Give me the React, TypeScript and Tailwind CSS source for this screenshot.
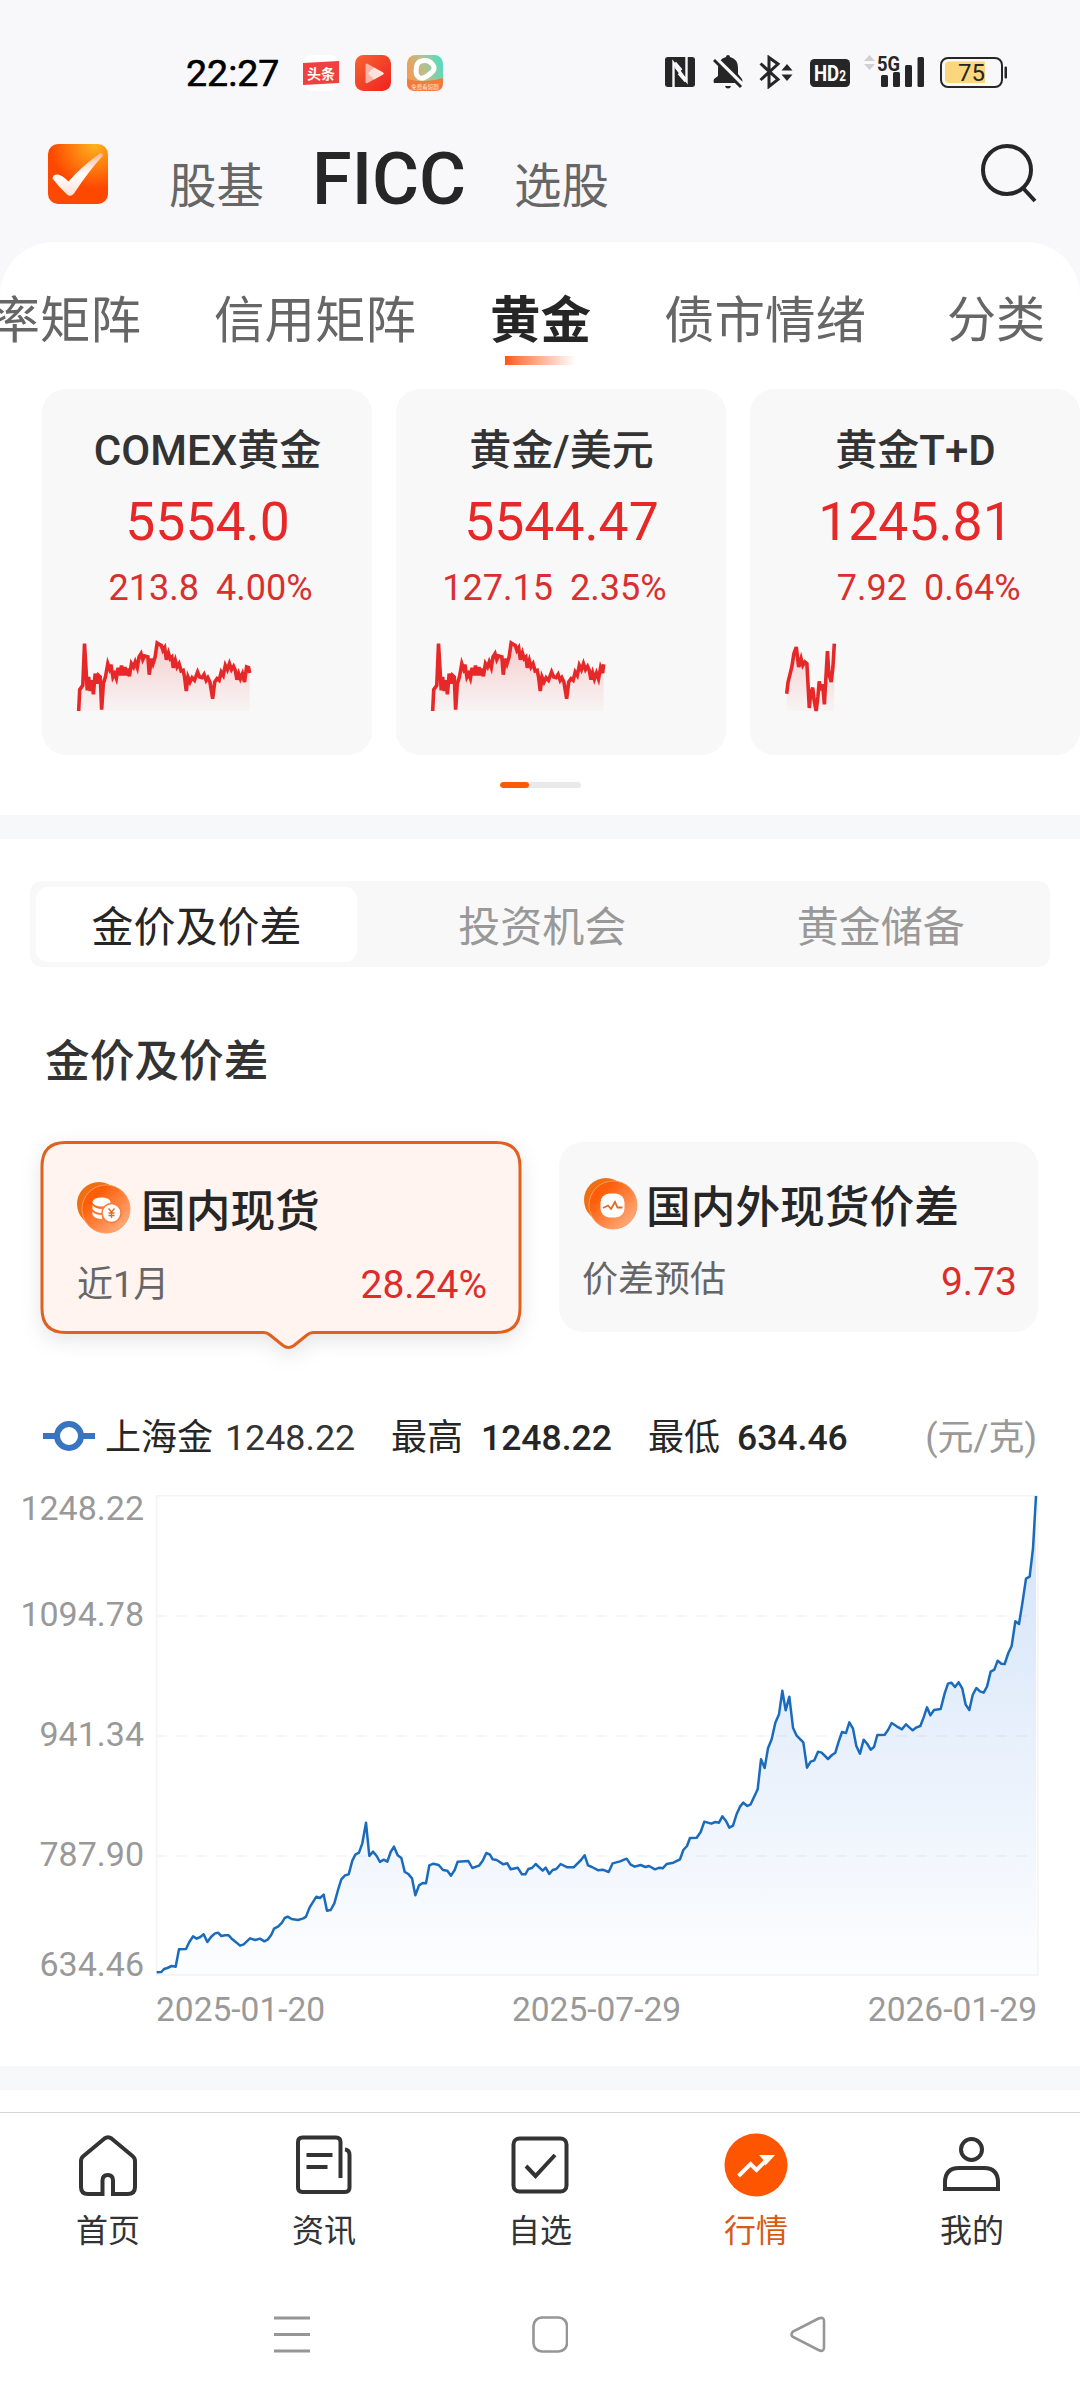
import React from "react";

const FONT = "font-[Roboto,'Noto_Sans_CJK_SC',sans-serif]";

const SPARK =
  "228,692 231,628 240,615 245,490 253,630 257,590 262,632 266,600 271,642 276,580 282,610 286,585 291,590 295,688 300,610 306,590 313,550 318,565 322,553 328,590 333,580 338,594 343,562 348,585 353,556 358,585 363,560 368,585 372,565 376,588 382,550 388,560 393,545 399,562 404,530 410,520 415,538 420,527 430,530 434,583 440,535 445,550 451,530 457,488 463,492 469,495 474,510 479,502 484,538 490,518 495,535 500,530 504,562 510,540 515,560 521,550 527,572 533,570 537,590 542,632 547,590 553,605 559,592 566,600 575,575 581,590 588,592 594,582 600,600 605,592 611,605 619,655 625,605 632,595 638,600 644,575 650,585 656,555 662,568 668,550 674,568 680,558 685,570";

const QUOTES = [
  {
    name: "COMEX黄金",
    price: "5554.0",
    change: "213.8",
    pct: "4.00%",
    left: 228,
    right: 727,
    points: SPARK + " 690,598 695,580 700,595 706,580 712,605 718,560 724,562 727,578",
  },
  {
    name: "黄金/美元",
    price: "5544.47",
    change: "127.15",
    pct: "2.35%",
    left: 228,
    right: 727,
    points: SPARK + " 690,598 695,578 700,596 706,578 712,596 718,562 724,578 727,552",
  },
  {
    name: "黄金T+D",
    price: "1245.81",
    change: "7.92",
    pct: "0.64%",
    left: 228,
    right: 367,
    points:
      "228,640 232,605 243,560 249,520 256,500 263,560 270,535 275,555 281,545 287,550 294,683 298,640 304,622 308,660 314,692 319,650 323,603 328,630 333,612 338,672 347,512 351,580 358,605 363,560 367,490",
  },
];

// Price history in thirds of a pixel, split into two legs with their own origin.
const LEGS = [
  {
    dx: -48,
    dy: 825,
    points:
      "50,607 64,606 72,597 82,594 95,588 107,590 117,538 138,537 148,516 159,499 170,506 181,501 191,493 202,516 213,501 224,491 234,488 244,498 255,496 266,496 277,508 290,518 300,527 311,523 330,505 346,510 360,506 373,514 384,508 394,494 402,476 414,470 426,458 434,444 443,440 455,447 474,450 490,445 498,440 509,412 529,380 540,384 551,374 561,422 572,420 583,400 594,360 604,328 615,316 626,313 637,272 646,254 657,248 667,220 678,158 688,258 699,245 710,258 720,276 731,269 742,275 752,246 762,230 773,256 784,264 794,305 806,313 816,325 826,376 837,346 848,339 858,340 868,286 880,281 896,285 909,300 922,302 933,317 944,300 953,275 985,273 997,294 1017,287 1028,272 1039,249 1050,254 1058,268 1070,270 1090,283 1102,280 1112,298 1133,293 1146,313 1156,313 1165,297 1176,294 1187,282 1208,302 1217,293 1228,312 1238,300 1249,297 1262,282 1282,292 1301,292 1323,270 1334,256 1344,286 1356,291 1375,301 1388,299 1406,306",
  },
  {
    dx: 1332,
    dy: -45,
    points:
      "38,1150 60,1144 80,1136 92,1154 104,1160 122,1155 136,1161 147,1158 165,1168 178,1163 188,1165 200,1152 220,1148 240,1138 250,1110 261,1098 270,1074 290,1073 302,1056 313,1025 334,1031 346,1026 357,1028 367,1009 378,1023 388,1043 399,1037 410,1002 420,980 430,968 442,978 452,973 473,928 483,838 494,864 504,805 515,778 526,728 537,703 547,632 557,691 568,650 579,743 590,767 610,787 621,863 632,845 643,841 654,815 665,818 684,837 696,825 706,818 716,785 726,756 738,759 748,727 759,746 769,798 780,821 791,779 802,792 812,809 822,801 832,765 854,764 864,750 875,729 890,739 906,748 918,733 938,751 950,742 961,738 971,712 981,682 991,706 1002,690 1022,687 1034,640 1044,611 1054,608 1065,621 1076,607 1087,626 1097,674 1108,690 1118,645 1129,624 1140,634 1151,638 1161,620 1172,575 1183,569 1193,542 1204,551 1214,552 1225,519 1235,498 1246,424 1257,432 1267,370 1278,296 1289,290 1299,205 1308,48",
  },
];

const HISTORY = LEGS.map((leg) =>
  leg.points
    .split(" ")
    .map((p) => {
      const [x, y] = p.split(",").map(Number);
      return `${x + leg.dx},${y + leg.dy}`;
    })
    .join(" ")
).join(" ");

function StatusBar() {
  return (
    <div className="flex h-[144px] items-start">
      <span className="ml-[186px] mt-[54px] w-[95px] text-[37.5px] leading-[38px] text-black [-webkit-text-stroke:0.6px_black]">22:27</span>
      <svg className="ml-[22px] mt-[55px]" width="36" height="36" viewBox="0 0 36 36">
        <rect width="36" height="36" rx="9" fill="#fff" />
        <path d="M0 8 L36 6 V28 L0 30 Z" fill="#f0403f" />
        <text x="18" y="23.5" fontSize="14" fontWeight="700" fill="#fff" textAnchor="middle">头条</text>
      </svg>
      <svg className="ml-[16px] mt-[55px]" width="36" height="36" viewBox="0 0 36 36">
        <defs>
          <linearGradient id="vid" x1="0" y1="0" x2="1" y2="1">
            <stop offset="0" stopColor="#f8642f" />
            <stop offset="1" stopColor="#ee2121" />
          </linearGradient>
        </defs>
        <rect width="36" height="36" rx="8.500" fill="url(#vid)" />
        <path d="M12 8.500 Q10.500 8 10.500 10 V27 Q10.500 29 12.500 28 L28 19.500 Q29.500 18.500 28 17.500 Z" fill="#fbb3a5" />
        <path d="M19 12.500 L28 17.500 Q29.500 18.500 28 19.500 L19 24.500 L13 18.500Z" fill="#fde3de" />
      </svg>
      <svg className="ml-[16px] mt-[55px]" width="36" height="36" viewBox="0 0 36 36">
        <defs>
          <linearGradient id="drm" x1="0" y1=".6" x2="1" y2=".3">
            <stop offset="0" stopColor="#f7974f" />
            <stop offset=".5" stopColor="#b9c08e" />
            <stop offset="1" stopColor="#53dcc0" />
          </linearGradient>
        </defs>
        <rect width="36" height="36" rx="8.500" fill="url(#drm)" />
        <path d="M0 24 Q18 29 36 23 V28 Q36 36 28 36 H8 Q0 36 0 28Z" fill="#f47a3c" />
        <path d="M13 6.500 Q21 3.500 26 10 Q29 14 24 18 Q16 25 12 22.500 Q8 20 9.500 12 Q10 8 13 6.500Z" fill="none" stroke="#fff" strokeWidth="5" />
        <text x="18" y="33.500" fontSize="5.500" fill="#ffe9dd" textAnchor="middle">免费看短剧</text>
      </svg>
      <svg className="ml-[222px] mt-[57px]" width="30" height="30" viewBox="0 0 30 30">
        <rect width="30" height="30" rx="3" fill="#262626" />
        <path d="M9 30 V6 L20 21 M22 0 V24 L11 10" fill="none" stroke="#f8f8fa" strokeWidth="2.400" transform="translate(-.5 0)" />
        <path d="M9.700 6 L16 13.500 M21 24 L14 16" stroke="#f8f8fa" strokeWidth="3.500" />
      </svg>
      <svg className="ml-[18px] mt-[55px]" width="30" height="34" viewBox="0 0 30 34">
        <path d="M15 0 Q17 0 17 2 Q25 4 25 13 V19 L29 24 Q30 26 29 28 H1 Q0 26 1 24 L5 21 V13 Q5 4 13 2 Q13 0 15 0Z M12 31 H18 Q17.500 33.500 15 33.500 Q12.500 33.500 12 31Z" fill="#262626" />
        <path d="M2 2.500 L31 31" stroke="#f8f8fa" strokeWidth="4" />
        <path d="M1 5 L28 32" stroke="#262626" strokeWidth="3" />
      </svg>
      <svg className="ml-[16px] mt-[55px]" width="34" height="34" viewBox="0 0 34 34">
        <path d="M1.500 8.500 L19 24.500 L10 31.500 V2.500 L19 9 L1.500 25" fill="none" stroke="#262626" strokeWidth="3" />
        <path d="M28 9 L33.500 15.500 H22.500Z M28 26 L33.500 19.500 H22.500Z" fill="#262626" />
      </svg>
      <svg className="ml-[17px] mt-[59px]" width="40" height="28" viewBox="0 0 40 28">
        <rect width="40" height="28" rx="4.500" fill="#262626" />
        <text x="4" y="22" fontSize="22" fontWeight="700" fill="#fff" textLength="32" lengthAdjust="spacingAndGlyphs">
          HD<tspan fontSize="14">2</tspan>
        </text>
      </svg>
      <svg className="ml-[14px] mt-[55px] overflow-visible" width="60" height="33" viewBox="0 0 60 33">
        <path d="M5.500 0 L11 6 H0Z M5.500 15 L11 9 H0Z" fill="#d0d0d2" />
        <text x="13" y="15.500" fontSize="20.500" fontWeight="700" fill="#262626" textLength="23" lengthAdjust="spacingAndGlyphs">5G</text>
        <rect x="17" y="20" width="7" height="12" rx="1.500" fill="#262626" />
        <rect x="29" y="17" width="7" height="15" rx="1.500" fill="#262626" />
        <rect x="41" y="10" width="7" height="22" rx="1.500" fill="#262626" />
        <rect x="53.500" y="2" width="6.500" height="30" rx="1.500" fill="#262626" />
      </svg>
      <svg className="ml-[16px] mt-[57px]" width="68" height="31" viewBox="0 0 68 31">
        <rect x="1" y="1" width="61" height="29" rx="7" fill="none" stroke="#262626" strokeWidth="2" />
        <path d="M9 4.500 H45 V26 H9 Q5 26 5 22 V8.500 Q5 4.500 9 4.500Z" fill="#fbd67c" />
        <rect x="64.500" y="9.500" width="2.500" height="12" rx="1" fill="#262626" />
        <text x="31.500" y="24" fontSize="24" fill="#262626" textAnchor="middle">75</text>
      </svg>
    </div>
  );
}

function Header() {
  return (
    <div className="flex h-[98px] items-start">
      <svg className="ml-[48px]" width="60" height="60" viewBox="0 0 60 60">
        <defs>
          <radialGradient id="lg" cx=".78" cy="0" r=".75">
            <stop offset="0" stopColor="#ffb41e" />
            <stop offset="1" stopColor="#fd4800" />
          </radialGradient>
          <linearGradient id="ck" x1="0" y1="0" x2="0" y2="1">
            <stop offset="0" stopColor="#fcb89a" />
            <stop offset=".5" stopColor="#fff" />
            <stop offset="1" stopColor="#fde0d4" />
          </linearGradient>
        </defs>
        <rect width="60" height="60" rx="10" fill="url(#lg)" />
        <path d="M4.500 34.500 Q5 30 10 30.500 Q14 31 20.500 37.500 Q34 22 52 9.500 Q55 8.500 54.500 12 Q40 28 26 49.500 Q22.500 53.500 19 50.500 Q11 43 4.500 34.500Z" fill="url(#ck)" />
      </svg>
      <div className="flex items-baseline leading-[72px] text-[#666]">
        <span className="ml-[61px] w-[94px] -translate-y-[1px] text-[47.500px] whitespace-nowrap">股基</span>
        <span className="ml-[49px] w-[155px] text-[72px] font-medium text-[#262626]">FICC</span>
        <span className="ml-[47px] -translate-y-[1px] text-[47.500px] whitespace-nowrap">选股</span>
      </div>
      <svg className="ml-auto mr-[42px] -mt-[1px]" width="58" height="62" viewBox="0 0 58 62">
        <circle cx="27" cy="27" r="24" fill="none" stroke="#262626" strokeWidth="4" />
        <path d="M43 45 L55 58" stroke="#262626" strokeWidth="4" />
      </svg>
    </div>
  );
}

function Tabs() {
  return (
    <div className="flex h-[147px] items-start overflow-hidden rounded-t-[54px] pt-[54px] text-[50.500px] leading-[50px] whitespace-nowrap text-[#666]">
      <span className="-ml-[61px]">利率矩阵</span>
      <span className="ml-[73px]">信用矩阵</span>
      <div className="ml-[74px] flex flex-col items-center">
        <span className="font-bold text-[#262626]">黄金</span>
        <span className="mt-[10px] h-[9px] w-[71px] bg-linear-to-r from-[#fe5500] to-white" />
      </div>
      <span className="ml-[73px]">债市情绪</span>
      <span className="ml-[81px] text-[49px]">分类</span>
    </div>
  );
}

function QuoteCard({ q, id }: { q: (typeof QUOTES)[number]; id: string }) {
  return (
    <div className="flex h-[366px] w-[330px] shrink-0 flex-col rounded-[24px] bg-[#f8f8f8] pt-[41px]">
      <span className="pl-[1px] text-center text-[42px] leading-[42px] font-medium text-[#333]">{q.name}</span>
      <span className="mt-[23px] pl-[1px] text-center text-[53.500px] leading-[54px] text-[#e62828]">{q.price}</span>
      <div className="mt-[21px] flex text-[36px] leading-[36px] text-[#d9302f]">
        <span className="w-[157px] text-right">{q.change}</span>
        <span className="ml-[17px]">{q.pct}</span>
      </div>
      <svg className="mt-[36px] ml-[36px] overflow-visible" width="172" height="69" viewBox="226 485 502 207" preserveAspectRatio="none">
        <defs>
          <linearGradient id={id} x1="0" y1="0" x2="0" y2="1">
            <stop offset="0" stopColor="#ee2424" stopOpacity=".2" />
            <stop offset="1" stopColor="#ee2424" stopOpacity=".02" />
          </linearGradient>
        </defs>
        <polygon points={`${q.left},692 ${q.points} ${q.right},692`} fill={`url(#${id})`} />
        <polyline points={q.points} fill="none" stroke="#e62828" strokeWidth="3.600" vectorEffect="non-scaling-stroke" />
      </svg>
    </div>
  );
}

function CoinBadge({ kind }: { kind: "coins" | "pulse" }) {
  return (
    <svg width="54" height="52" viewBox="0 0 54 52">
      <defs>
        <linearGradient id={`b-${kind}`} x1=".1" y1=".1" x2=".9" y2=".9">
          <stop offset=".2" stopColor="#fe5e0a" />
          <stop offset="1" stopColor="#ffae80" />
        </linearGradient>
      </defs>
      <circle cx="22" cy="22" r="22" fill="#ef7013" />
      <circle cx="29" cy="27" r="24" fill={`url(#b-${kind})`} stroke="#ff9a5c" strokeWidth="1" />
      {kind === "coins" ? (
        <g>
          <ellipse cx="24.500" cy="20" rx="9" ry="4.500" fill="#fff" />
          <path d="M15.500 23 Q18 27 25 27 V31 Q18 31 15.500 27Z M15.500 29.500 Q18 33 25 33 V37 Q18 37 15.500 33Z" fill="#fff" />
          <circle cx="34.500" cy="31" r="9.500" fill="#fff" stroke="#fe7a35" strokeWidth="1.500" />
          <path d="M31.500 26.500 L34.500 30 L37.500 26.500 M34.500 30 V36 M31.500 31 H37.500 M31.500 33.500 H37.500" fill="none" stroke="#e06a20" strokeWidth="1.400" />
        </g>
      ) : (
        <g>
          <rect x="16.500" y="15.500" width="24" height="24" rx="9" fill="#fff" />
          <path d="M19 30 L24 27.500 L27 31 L31 24 L33.500 29.500 H38.500" fill="none" stroke="#e06a20" strokeWidth="1.800" />
        </g>
      )}
    </svg>
  );
}

function SpreadCards() {
  return (
    <div className="mt-[56px] ml-[40px] flex items-start">
      <div className="relative h-[193px] w-[481px]">
        <svg className="absolute top-0 left-0 overflow-visible drop-shadow-[0_6px_10px_rgba(0,0,0,0.1)]" width="481" height="208" viewBox="0 0 481 208">
          <path
            d="M25.500 1.500 H456 Q480 1.500 480 25.500 V167.500 Q480 191.500 456 191.500 H273 Q270 191.500 267 194 L254 204.500 Q248.500 208.500 243 204.500 L230 194 Q227 191.500 224 191.500 H25.500 Q2 191.500 2 167.500 V25.500 Q2 1.500 25.500 1.500Z"
            fill="#fff4ef"
            stroke="#e06020"
            strokeWidth="3"
          />
        </svg>
        <div className="relative flex items-start pt-[41px] pl-[37px]">
          <CoinBadge kind="coins" />
          <span className="mt-[8px] ml-[10px] text-[44.700px] leading-[45px] font-medium text-[#262626]">国内现货</span>
        </div>
        <div className="relative mt-[31px] flex justify-between pr-[34px] pl-[37px] leading-[38px]">
          <span className="text-[36px] text-[#666]">近1月</span>
          <span className="text-[39px] text-[#dc2c2c]">28.24%</span>
        </div>
      </div>
      <div className="mt-[1px] ml-[38px] h-[190px] w-[479px] rounded-[24px] bg-[#f8f8f8]">
        <div className="flex items-start pt-[36px] pl-[25px]">
          <CoinBadge kind="pulse" />
          <span className="mt-[8px] ml-[8px] text-[44.700px] leading-[45px] font-medium whitespace-nowrap text-[#262626]">国内外现货价差</span>
        </div>
        <div className="mt-[32px] flex justify-between pr-[21px] pl-[23px] leading-[38px]">
          <span className="-mt-[2px] text-[36px] text-[#666]">价差预估</span>
          <span className="text-[39px] text-[#dc2c2c]">9.73</span>
        </div>
      </div>
    </div>
  );
}

function HistoryChart() {
  return (
    <>
      <div className="mt-[86px] flex h-[36px] items-center pl-[43px] text-[36px] leading-[36px] whitespace-nowrap text-[#333]">
        <svg className="-mt-[4px]" width="52" height="30" viewBox="0 0 52 30">
          <path d="M0 15 H52" stroke="#3874c0" strokeWidth="6" />
          <circle cx="26" cy="15" r="12" fill="#fff" stroke="#3874c0" strokeWidth="6" />
        </svg>
        <span className="ml-[10px] w-[120px] text-[#262626]">上海金</span>
        <span className="w-[166px] text-[35.800px]">1248.22</span>
        <span className="w-[90px] text-[#262626]">最高</span>
        <span className="w-[167px] text-[35.500px] font-medium text-[#262626]">1248.22</span>
        <span className="w-[89px] text-[#262626]">最低</span>
        <span className="text-[35.500px] font-medium text-[#262626]">634.46</span>
        <span className="mr-[43px] ml-auto text-[#999]">(元/克)</span>
      </div>
      <div className="mt-[35px] flex h-[485px]">
        <div className="flex w-[144px] flex-col text-right text-[34px] leading-[34px] text-[#999]">
          <span>1248.22</span>
          <span className="mt-[72px]">1094.78</span>
          <span className="mt-[86px]">941.34</span>
          <span className="mt-[86px]">787.90</span>
          <span className="mt-[76px]">634.46</span>
        </div>
        <svg className="mt-[4px] ml-[12px]" width="883" height="481" viewBox="0 0 2649 1443">
          <defs>
            <linearGradient id="hist" gradientUnits="userSpaceOnUse" x1="0" y1="0" x2="0" y2="1443">
              <stop offset="0" stopColor="#1f6fdd" stopOpacity=".2" />
              <stop offset="1" stopColor="#1f6fdd" stopOpacity=".01" />
            </linearGradient>
          </defs>
          <path d="M2 2 H2645 V1440 H2 Z" fill="none" stroke="#f3f4f6" strokeWidth="5" />
          <path d="M2 363 H2645 M2 723 H2645 M2 1083 H2645" stroke="#f3f4f6" strokeWidth="5" strokeDasharray="30 30" />
          <polygon points={`2,1440 ${HISTORY} 2640,1440`} fill="url(#hist)" />
          <polyline points={HISTORY} fill="none" stroke="#1b6bbd" strokeWidth="7.500" strokeLinejoin="round" />
        </svg>
      </div>
      <div className="mt-[17px] flex h-[73px] justify-between pr-[43px] pl-[156px] text-[33.500px] leading-[34px] text-[#999]">
        <span>2025-01-20</span>
        <span>2025-07-29</span>
        <span>2026-01-29</span>
      </div>
    </>
  );
}

function NavItem({ label, active, children }: { label: string; active?: boolean; children: React.ReactNode }) {
  return (
    <div className="flex flex-1 flex-col items-center pt-[20px]">
      <svg width="64" height="64" viewBox="0 0 64 64" fill="none" stroke="#333" strokeWidth="4">
        {children}
      </svg>
      <span className={active ? "mt-[18px] text-[32px] leading-[32px] text-[#d85a16]" : "mt-[18px] text-[32px] leading-[32px] text-[#333]"}>
        {label}
      </span>
    </div>
  );
}

function BottomNav() {
  return (
    <div className="h-[288px] border-t border-[#d6d6d6] bg-white">
      <div className="flex">
        <NavItem label="首页">
          <path d="M37 61 H51.500 Q59 61 59 54 V28 Q59 25 56.500 23 L35.500 5.500 Q32 3 28.500 5.500 L7.500 23 Q5 25 5 28 V54 Q5 61 12 61 H26.500 V47.500 Q26.500 42 31.800 42 Q37 42 37 47.500 V63" />
        </NavItem>
        <NavItem label="资讯">
          <path d="M48.500 45 V9 Q48.500 4.500 44 4.500 H10.500 Q6 4.500 6 9 V54.500 Q6 59 10.500 59 H53 Q57.500 59 57.500 54.500 V22 Q57.500 17 53 16.500 M14.500 22 H40.500 M14.500 34 H35.500" />
        </NavItem>
        <NavItem label="自选">
          <rect x="5.500" y="5.500" width="53" height="53" rx="6" />
          <path d="M18 33 L27.500 43 L47 22" />
        </NavItem>
        <NavItem label="行情" active>
          <circle cx="32" cy="32" r="31.500" fill="#fe5500" stroke="none" />
          <path d="M14.500 43 L26.500 31 L32.500 37 L43 26.500" stroke="#fff" />
          <path d="M35 22 H51 L41.500 32.500 L39.500 27Z" fill="#fff" stroke="none" />
        </NavItem>
        <NavItem label="我的">
          <circle cx="31.500" cy="16.500" r="10.500" />
          <path d="M5 56 V49.500 Q5 35 19 35 H44 Q58 35 58 49.500 V56Z" />
        </NavItem>
      </div>
      <div className="mt-[69px] flex items-center gap-[222px] pl-[274px]">
        <svg width="36" height="37" viewBox="0 0 36 37">
          <path d="M0 2 H36 M0 18.500 H36 M0 35 H36" stroke="#969696" strokeWidth="3" />
        </svg>
        <svg width="36" height="37" viewBox="0 0 36 37">
          <rect x="1.500" y="1.500" width="33.500" height="34" rx="8.500" fill="none" stroke="#969696" strokeWidth="2.600" />
        </svg>
        <svg width="36" height="37" viewBox="0 0 36 37">
          <path d="M28.500 2.500 L3 15.500 Q0 18.500 3 21 L28.500 34 Q34 36.500 34 31.500 V5 Q34 .5 28.500 2.500Z" fill="none" stroke="#969696" strokeWidth="2.600" />
        </svg>
      </div>
    </div>
  );
}

export default function App() {
  return (
    <div className={`${FONT} h-[2400px] w-[1080px] overflow-hidden bg-[#f8f8fa]`}>
      <StatusBar />
      <Header />
      <main className="rounded-t-[54px] bg-white">
        <Tabs />
        <div className="ml-[42px] flex gap-[24px]">
          {QUOTES.map((q, i) => (
            <QuoteCard key={q.name} q={q} id={`spark-${i}`} />
          ))}
        </div>
        <div className="mx-auto mt-[27px] h-[6px] w-[81px] overflow-hidden rounded-full bg-[#e9e9e9]">
          <div className="h-full w-[29px] rounded-full bg-[#fa5a0a]" />
        </div>
        <div className="mt-[27px] h-[24px] bg-[#f7f8fa]" />
        <div className="mx-[30px] mt-[42px] flex h-[86px] items-center rounded-[12px] bg-[#f8f8f8] px-[6px] text-[42px] leading-[42px] text-[#999]">
          <span className="flex h-[75px] w-[321px] shrink-0 items-center justify-center rounded-[12px] bg-white pt-[7px] text-[#262626]">金价及价差</span>
          <span className="flex-1 pt-[7px] pl-[22px] text-center">投资机会</span>
          <span className="flex-1 pt-[7px] pl-[12px] text-center">黄金储备</span>
        </div>
        <h2 className="mt-[73px] ml-[45px] text-[44.700px] leading-[45px] font-medium text-[#333]">金价及价差</h2>
        <SpreadCards />
        <HistoryChart />
      </main>
      <div className="h-[24px] bg-[#f7f8fa]" />
      <div className="h-[22px] bg-white" />
      <BottomNav />
    </div>
  );
}
